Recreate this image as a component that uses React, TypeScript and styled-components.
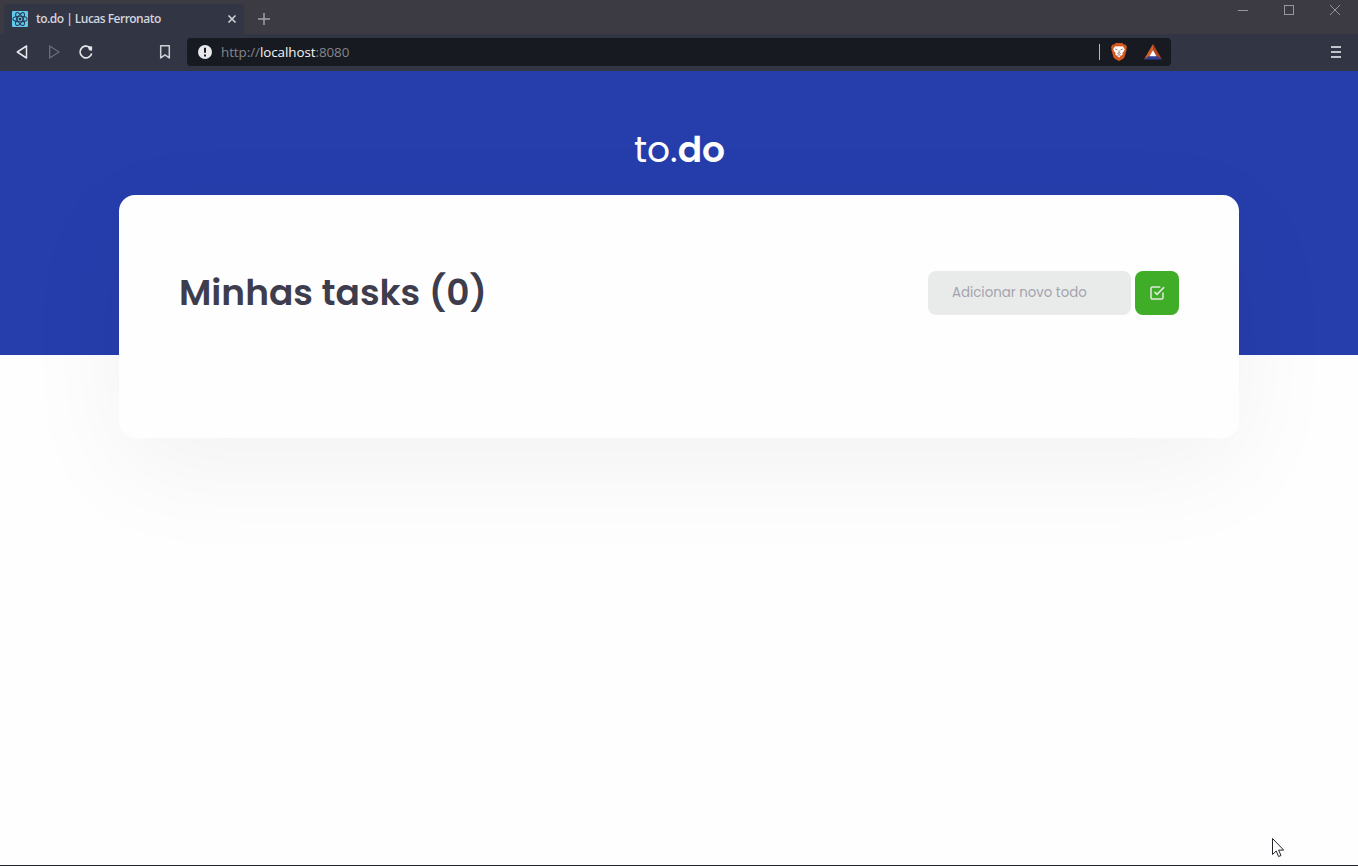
import React from "react";
import styled, { createGlobalStyle } from "styled-components";

const Global = createGlobalStyle`
  *, *::before, *::after { box-sizing: border-box; }
  html, body, #root { height: 100%; }
  body { margin: 0; overflow: hidden; background: #fefefe; }
`;

const Window = styled.div`
  height: 866px;
  display: flex;
  flex-direction: column;
  border-bottom: 1px solid #24252b;
`;

const TitleBar = styled.div`
  height: 34px;
  flex: none;
  display: flex;
  background: #3c3b43;
  padding-left: 4px;
`;

const Tab = styled.div`
  width: 240px;
  height: 30px;
  margin-top: 4px;
  padding: 0 7px 0 8px;
  display: flex;
  align-items: center;
  gap: 8px;
  background: #323543;
  border-radius: 4px 4px 0 0;
  color: #d3d4de;
  font: 600 12px/16px "Segoe UI", "Open Sans", "Noto Sans", sans-serif;
  letter-spacing: -0.52px;
`;

const TabTitle = styled.span`
  flex: 1;
  white-space: nowrap;
`;

const NewTab = styled.div`
  margin: 13px 0 0 14px;
  height: 12px;
  display: flex;
`;

const WindowControls = styled.div`
  margin: 5px 18px 0 auto;
  height: 10px;
  display: flex;
  gap: 36px;
`;

const Toolbar = styled.div`
  height: 37px;
  flex: none;
  display: flex;
  align-items: center;
  background: #323543;
  padding: 0 17px 1px 14px;
`;

const Navigation = styled.div`
  width: 173px;
  display: flex;
  align-items: center;
  gap: 16px;
  padding-right: 14px;
  & > :last-child { margin-left: auto; }
`;

const AddressBar = styled.div`
  width: 984px;
  height: 28px;
  display: flex;
  align-items: center;
  padding: 0 9px 0 11px;
  background: #171a21;
  border-radius: 4px;
`;

const Url = styled.span`
  flex: 1;
  margin-left: 9px;
  font: 400 13.4px/18px "Segoe UI", "Open Sans", "Noto Sans", sans-serif;
  letter-spacing: -0.06px;
  color: #85868c;
`;

const Host = styled.span`
  color: #f4f4f6;
`;

const Divider = styled.span`
  width: 1px;
  height: 16px;
  background: #b4b6c0;
  margin-right: 11px;
`;

const Shields = styled.div`
  display: flex;
  align-items: center;
  gap: 17px;
`;

const Menu = styled.div`
  margin-left: auto;
  display: flex;
`;

const Page = styled.main`
  flex: 1;
  background: #fefefe;
  font-family: Poppins, Inter, sans-serif;
`;

const Hero = styled.header`
  height: 284px;
  background: #263eac;
  padding-top: 52px;
`;

const Logo = styled.h1`
  margin: 0;
  height: 54px;
  padding-left: 1px;
  text-align: center;
  color: #fff;
  font-weight: 400;
  font-size: 36px;
  line-height: 54px;
`;

const LogoBold = styled.strong`
  font-weight: 600;
`;

const Card = styled.section`
  position: relative;
  width: 1120px;
  height: 243px;
  margin: -160px auto 0;
  padding: 76px 60px;
  background: #fefefe;
  border-radius: 16px;
  box-shadow: 0 30px 110px rgba(0, 0, 0, 0.05);
`;

const CardHeader = styled.div`
  height: 44px;
  display: flex;
  justify-content: space-between;
  align-items: center;
`;

const Heading = styled.h2`
  margin: 0;
  font-weight: 600;
  font-size: 36px;
  line-height: 44px;
  color: #3d3d4d;
  white-space: nowrap;
`;

const Form = styled.div`
  display: flex;
  gap: 4px;
`;

const Input = styled.input`
  width: 203px;
  height: 44px;
  padding: 0 24px;
  border: 0;
  border-radius: 8px;
  background: #e9ebeb;
  font: 400 13.333px Poppins, Inter, sans-serif;
  &::placeholder { color: #a3a3ad; opacity: 1; }
`;

const AddButton = styled.button`
  width: 44px;
  height: 44px;
  padding: 0;
  border: 0;
  border-radius: 8px;
  background: #3fad27;
  display: flex;
  align-items: center;
  justify-content: center;
`;

const Pointer = styled.svg`
  position: absolute;
  left: 1272px;
  top: 838px;
`;

const ReactIcon = () => (
  <svg width="16" height="16" viewBox="0 0 16 16" fill="none" stroke="#28405a" strokeWidth="1.1">
    <rect width="16" height="16" rx="1" fill="#61c9ee" stroke="none" />
    <ellipse cx="8" cy="8" rx="7.2" ry="2.8" />
    <ellipse cx="8" cy="8" rx="7.2" ry="2.8" transform="rotate(60 8 8)" />
    <ellipse cx="8" cy="8" rx="7.2" ry="2.8" transform="rotate(120 8 8)" />
    <circle cx="8" cy="8" r="1.3" fill="#20303f" stroke="none" />
  </svg>
);

const BraveIcon = () => (
  <svg width="16" height="18" viewBox="0 0 16 18">
    <path d="M4.7 0h6.6l1.5 1.6 1.6-.1L16 4l-.6 1.6.3 1-2 7.2c-.3 1-1 1.6-1.8 2.2L8 18l-3.900-2c-.8-.6-1.500-1.200-1.800-2.200l-2-7.200.3-1L0 4l1.600-2.500 1.600.1z" fill="#d4581f" />
    <path d="M4.200 3.200l1.800.3L8 3.200l2 .3 1.800-.3 1.900 2.800-.6 2-1.700 2.100.2 1.600L10 12.800l-2 1.600-2-1.600-1.600-1.100.2-1.600-1.700-2.100-.6-2z" fill="#fff" />
    <path d="M4.300 6l2.200 1M11.700 6L9.500 7M8 7.500v2.300M6.300 10.500l1.700-.7 1.700.7M6.500 12.500L8 11.600l1.500.9" stroke="#8d6b62" strokeWidth=".9" fill="none" />
  </svg>
);

const BatIcon = () => (
  <svg width="18" height="16" viewBox="0 0 18 16">
    <path d="M9 0v6l-3.300 6L0 15.500z" fill="#d6602a" />
    <path d="M9 0v6l3.300 6 5.700 3.500z" fill="#b04420" />
    <path d="M0 15.500L5.500 12h7l5.500 3.500z" fill="#33409a" />
    <path d="M9 6l3.500 6.200h-7z" fill="#fff" />
  </svg>
);

export default function App() {
  return (
    <>
      <Global />
      <Window>
        <TitleBar>
          <Tab>
            <ReactIcon />
            <TabTitle>to.do | Lucas Ferronato</TabTitle>
            <svg width="10" height="10" viewBox="0 0 10 10" stroke="#d6d7dc" strokeWidth="1.5">
              <path d="M1.500 1.500l7 7M8.500 1.500l-7 7" />
            </svg>
          </Tab>
          <NewTab>
            <svg width="12" height="12" viewBox="0 0 12 12" stroke="#a2a2a8" strokeWidth="1.5">
              <path d="M6 0v12M0 6h12" />
            </svg>
          </NewTab>
          <WindowControls>
            <svg width="10" height="10" stroke="#96969b"><path d="M0 5.500h10" /></svg>
            <svg width="10" height="10" stroke="#96969b" fill="none"><rect x=".5" y=".5" width="9" height="9" /></svg>
            <svg width="10" height="10" stroke="#96969b"><path d="M0 0l10 10M10 0L0 10" /></svg>
          </WindowControls>
        </TitleBar>
        <Toolbar>
          <Navigation>
            <svg width="16" height="16" viewBox="0 0 16 16" fill="none" stroke="#e6e6ea" strokeWidth="1.5" strokeLinejoin="round">
              <path d="M12.500 2v12L3.300 8z" />
            </svg>
            <svg width="16" height="16" viewBox="0 0 16 16" fill="none" stroke="#686b7a" strokeWidth="1.400" strokeLinejoin="round">
              <path d="M3.700 2v12L13 8z" />
            </svg>
            <svg width="16" height="16" viewBox="0 0 16 16" fill="none" stroke="#e6e6ea" strokeWidth="1.700">
              <path d="M13.700 9.500A5.900 5.900 0 1 1 11.700 3.400" />
              <path d="M9.700 2.300l4.500.2-.2 4.200-3-.5z" fill="#e6e6ea" stroke="none" />
            </svg>
            <svg width="16" height="16" viewBox="0 0 16 16" fill="none" stroke="#cfd0d8" strokeWidth="1.500">
              <path d="M3.700 1.800h8.600v12.100L8 10.900l-4.300 3z" strokeLinejoin="round" />
            </svg>
          </Navigation>
          <AddressBar>
            <svg width="14" height="14" viewBox="0 0 14 14">
              <circle cx="7" cy="7" r="7" fill="#e9e9eb" />
              <path d="M7 2.800v5M7 9.400v2" stroke="#171a21" strokeWidth="2" />
            </svg>
            <Url>http://<Host>localhost</Host>:8080</Url>
            <Divider />
            <Shields>
              <BraveIcon />
              <BatIcon />
            </Shields>
          </AddressBar>
          <Menu>
            <svg width="10" height="12" stroke="#c3c4cc" strokeWidth="2"><path d="M0 1h10M0 6h10M0 11h10" /></svg>
          </Menu>
        </Toolbar>
        <Page>
          <Hero>
            <Logo>to.<LogoBold>do</LogoBold></Logo>
          </Hero>
          <Card>
            <CardHeader>
              <Heading>Minhas tasks (0)</Heading>
              <Form>
                <Input placeholder="Adicionar novo todo" />
                <AddButton>
                  <svg width="16" height="16" viewBox="0 0 24 24" fill="none" stroke="#e3e8e0" strokeWidth="2.300" strokeLinecap="round" strokeLinejoin="round">
                    <path d="M9 11l3 3L22 4" />
                    <path d="M21 12v7a2 2 0 0 1-2 2H5a2 2 0 0 1-2-2V5a2 2 0 0 1 2-2h11" />
                  </svg>
                </AddButton>
              </Form>
            </CardHeader>
          </Card>
        </Page>
      </Window>
      <Pointer width="13" height="20" viewBox="0 0 13 20">
        <path d="M.5.500v16l3.700-3.500 2.400 5.500 2.400-1-2.400-5.400h5.100z" fill="#fff" stroke="#24242c" />
      </Pointer>
    </>
  );
}
